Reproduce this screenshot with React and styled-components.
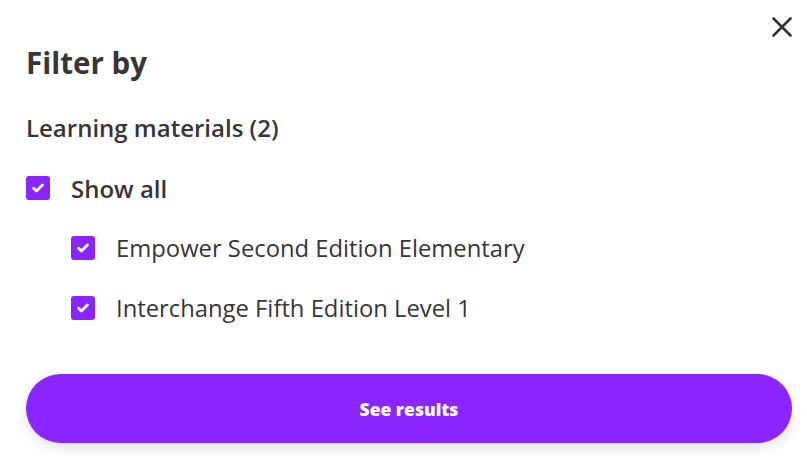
import React, { useState } from "react";
import styled, { createGlobalStyle } from "styled-components";

const GlobalStyle = createGlobalStyle`
  html, body {
    margin: 0;
    padding: 0;
    background: #ffffff;
  }
  body {
    font-family: "Open Sans", "Noto Sans", sans-serif;
    color: #363636;
  }
`;

const Panel = styled.div`
  position: relative;
  box-sizing: border-box;
  width: 807px;
  height: 465px;
  padding: 45px 15px 0 26px;
  display: flex;
  flex-direction: column;
`;

const CloseButton = styled.button`
  position: absolute;
  top: 14px;
  right: 12px;
  width: 26px;
  height: 26px;
  padding: 0;
  border: 0;
  background: transparent;
  display: flex;
  align-items: center;
  justify-content: center;
  cursor: pointer;
`;

const Title = styled.h2`
  margin: 0;
  font-size: 29.5px;
  line-height: 36px;
  font-weight: 700;
  color: #363636;
`;

const SectionHeading = styled.h3`
  margin: 33px 0 0;
  font-size: 24px;
  line-height: 28px;
  font-weight: 600;
  color: #363636;
`;

const OptionList = styled.div`
  margin-top: 34px;
  display: flex;
  flex-direction: column;
  gap: 36px;
`;

const Option = styled.label`
  display: flex;
  align-items: center;
  gap: 21px;
  height: 24px;
  padding-left: ${(p) => (p.$nested ? "45px" : "0")};
  font-size: ${(p) => (p.$strong ? "24px" : "23.8px")};
  font-weight: ${(p) => (p.$strong ? 600 : 400)};
  color: #363636;
  cursor: pointer;
  user-select: none;
`;

const Box = styled.span`
  flex: none;
  width: 24px;
  height: 24px;
  border-radius: 3px;
  background: ${(p) => (p.$checked ? "#8a25ff" : "#ffffff")};
  border: ${(p) => (p.$checked ? "0" : "2px solid #8a25ff")};
  box-sizing: border-box;
  display: flex;
  align-items: center;
  justify-content: center;
`;

const SubmitButton = styled.button`
  margin-top: 54px;
  width: 766px;
  height: 69px;
  border: 0;
  border-radius: 35px;
  background: #8a25ff;
  color: #ffffff;
  font-family: "Open Sans", "Noto Sans", sans-serif;
  font-size: 17.5px;
  font-weight: 800;
  box-shadow: 0 4px 14px rgba(0, 0, 0, 0.12);
  cursor: pointer;
`;

const Check = () => (
  <svg width="12" height="10" viewBox="0 0 12 10" fill="none">
    <path
      d="M1.6 5.2 L4.4 7.9 L10.4 1.9"
      stroke="#ffffff"
      strokeWidth="2.8"
      strokeLinecap="round"
      strokeLinejoin="round"
    />
  </svg>
);

const CheckOption = ({ checked, onToggle, nested, strong, children }) => (
  <Option $nested={nested} $strong={strong} onClick={onToggle}>
    <Box $checked={checked}>{checked && <Check />}</Box>
    {children}
  </Option>
);

const materials = [
  "Empower Second Edition Elementary",
  "Interchange Fifth Edition Level 1",
];

export default function App() {
  const [selected, setSelected] = useState(materials.map(() => true));
  const allOn = selected.every(Boolean);

  return (
    <>
      <GlobalStyle />
      <Panel>
        <CloseButton aria-label="Close">
          <svg width="20" height="20" viewBox="0 0 20 20">
            <path
              d="M1.5 1.5 L18.5 18.5 M18.5 1.5 L1.5 18.5"
              stroke="#333333"
              strokeWidth="2.6"
              strokeLinecap="round"
            />
          </svg>
        </CloseButton>
        <Title>Filter by</Title>
        <SectionHeading>Learning materials ({materials.length})</SectionHeading>
        <OptionList>
          <CheckOption
            strong
            checked={allOn}
            onToggle={() => setSelected(materials.map(() => !allOn))}
          >
            Show all
          </CheckOption>
          {materials.map((m, i) => (
            <CheckOption
              key={m}
              nested
              checked={selected[i]}
              onToggle={() =>
                setSelected((s) => s.map((v, j) => (j === i ? !v : v)))
              }
            >
              {m}
            </CheckOption>
          ))}
        </OptionList>
        <SubmitButton>See results</SubmitButton>
      </Panel>
    </>
  );
}
